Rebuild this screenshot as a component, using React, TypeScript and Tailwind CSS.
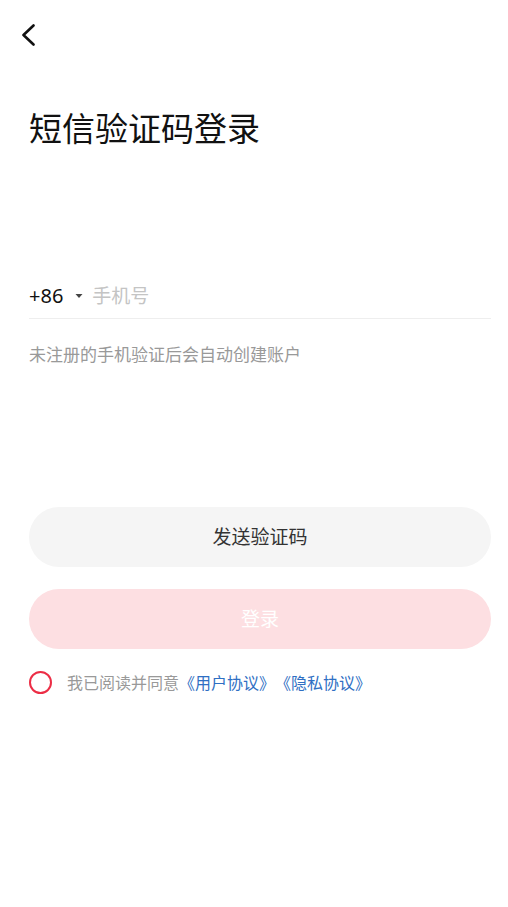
import { useState } from 'react'

export default function App() {
  const [phone, setPhone] = useState('')
  const [agreed, setAgreed] = useState(false)

  return (
    <div className="w-full h-[907px] bg-white font-['Noto_Sans','Noto_Sans_CJK_SC',sans-serif] pl-[29px] pr-[17px] [text-spacing-trim:space-all]">
      {/* Back */}
      <button className="block pt-[24px] -ml-[8px]">
        <svg width="14" height="22" viewBox="0 0 14 22" fill="none">
          <path d="M12.5 1.5 L2.5 11 L12.5 20.5" stroke="#111" strokeWidth="2.6" strokeLinecap="round" strokeLinejoin="round" />
        </svg>
      </button>

      <h1 className="mt-[66px] text-[33px] leading-none text-[#111] font-normal">短信验证码登录</h1>

      {/* Phone input */}
      <div className="mt-[129px] h-[45px] flex items-center border-b border-[#eeeeee]">
        <span className="text-[20px] leading-none text-[#111]">+86</span>
        <svg className="ml-[12px]" width="8" height="6" viewBox="0 0 8 6">
          <path d="M0.5 1 L7.5 1 L4 5 Z" fill="#444" />
        </svg>
        <input
          className="ml-[9px] flex-1 outline-none text-[19px] leading-none text-[#111] placeholder:text-[#c4c4c4] bg-transparent"
          placeholder="手机号"
          value={phone}
          onChange={(e) => setPhone(e.target.value)}
        />
      </div>

      <p className="mt-[27px] text-[17px] leading-none text-[#999999]">未注册的手机验证后会自动创建账户</p>

      {/* Buttons */}
      <button className="mt-[144px] w-full h-[60px] rounded-full bg-[#f5f5f5] text-[19px] text-[#333333] flex items-center justify-center">
        发送验证码
      </button>
      <button className="mt-[22px] w-full h-[60px] rounded-full bg-[#fddfe2] text-[19px] text-white flex items-center justify-center">
        登录
      </button>

      {/* Agreement */}
      <div className="mt-[22px] flex items-center">
        <button
          onClick={() => setAgreed(!agreed)}
          className={agreed ? 'w-[23px] h-[23px] rounded-full border-2 border-[#ec2d45] bg-[#ec2d45]' : 'w-[23px] h-[23px] rounded-full border-2 border-[#ec2d45]'}
        />
        <p className="ml-[15px] text-[16px] leading-none text-[#999999]">
          我已阅读并同意<span className="text-[#2f6fc3]">《用户协议》《隐私协议》</span>
        </p>
      </div>
    </div>
  )
}
